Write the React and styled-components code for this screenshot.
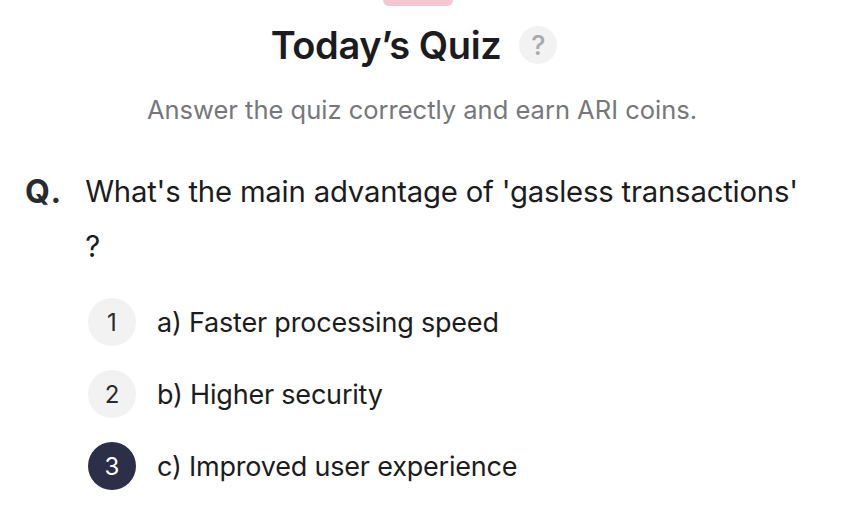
import styled, { createGlobalStyle } from "styled-components";

const GlobalStyle = createGlobalStyle`
  * { box-sizing: border-box; }
  body {
    margin: 0;
    background: #ffffff;
    font-family: Inter, "Noto Sans", "Liberation Sans", sans-serif;
  }
`;

const options = [
  { no: 1, text: "a) Faster processing speed" },
  { no: 2, text: "b) Higher security" },
  { no: 3, text: "c) Improved user experience", selected: true },
];

function App() {
  return (
    <>
      <GlobalStyle />
      <Sheet>
        <Handle />
        <Header>
          <Title>Today’s Quiz</Title>
          <HelpBadge>?</HelpBadge>
        </Header>
        <Subtitle>Answer the quiz correctly and earn ARI coins.</Subtitle>

        <Question>
          <QMark>Q.</QMark>
          <QText>What's the main advantage of 'gasless transactions' ?</QText>
        </Question>

        <OptionList>
          {options.map((o) => (
            <Option key={o.no}>
              <Num selected={o.selected}>{o.no}</Num>
              <OptionText>{o.text}</OptionText>
            </Option>
          ))}
        </OptionList>
      </Sheet>
    </>
  );
}

const Sheet = styled.div`
  width: 844px;
  height: 524px;
  overflow: hidden;
  background: #ffffff;
  display: flex;
  flex-direction: column;
`;

const Handle = styled.div`
  align-self: center;
  width: 70px;
  height: 12px;
  margin-top: -6px;
  margin-left: -8px;
  border-radius: 6px;
  background: #f3c6d2;
`;

const Header = styled.div`
  display: flex;
  align-items: center;
  justify-content: center;
  gap: 18px;
  margin-top: 16px;
  margin-left: -16px;
`;

const Title = styled.h1`
  margin: 0;
  font-size: 38px;
  line-height: 46px;
  font-weight: 600;
  color: #1c1c1e;
  letter-spacing: -0.4px;
`;

const HelpBadge = styled.span`
  width: 38px;
  height: 38px;
  border-radius: 50%;
  background: #f2f2f3;
  color: #a9a9ad;
  font-size: 27px;
  font-weight: 500;
  display: flex;
  align-items: center;
  justify-content: center;
`;

const Subtitle = styled.p`
  margin: 26px 0 0;
  text-align: center;
  font-size: 25.5px;
  line-height: 32px;
  color: #77777b;
`;

const Question = styled.div`
  display: flex;
  align-items: flex-start;
  gap: 22px;
  margin-top: 38px;
  padding: 0 36px 0 25px;
`;

const QMark = styled.span`
  font-size: 32px;
  font-weight: 700;
  color: #2a2a2c;
  line-height: 55px;
  letter-spacing: 2px;
  flex-shrink: 0;
`;

const QText = styled.p`
  margin: 0;
  font-size: 29.3px;
  line-height: 55px;
  color: #1c1c1e;
  letter-spacing: -0.2px;
`;

const OptionList = styled.div`
  display: flex;
  flex-direction: column;
  gap: 24px;
  margin-top: 24px;
  padding-left: 88px;
`;

const Option = styled.div`
  display: flex;
  align-items: center;
  gap: 21px;
`;

const Num = styled.span`
  width: 48px;
  height: 48px;
  border-radius: 50%;
  flex-shrink: 0;
  display: flex;
  align-items: center;
  justify-content: center;
  font-size: 24px;
  background: ${(p) => (p.selected ? "#2c2f48" : "#f2f2f3")};
  color: ${(p) => (p.selected ? "#ffffff" : "#2a2a2c")};
`;

const OptionText = styled.span`
  font-size: 27px;
  color: #1c1c1e;
  letter-spacing: -0.2px;
`;

export default App;
